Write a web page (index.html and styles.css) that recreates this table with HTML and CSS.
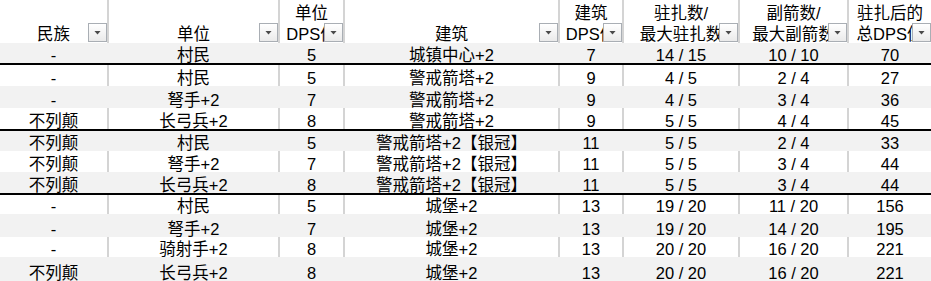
FILE: index.html
```html
<!DOCTYPE html>
<html lang="zh">
<head>
<meta charset="utf-8">
<link rel="stylesheet" href="styles.css">
</head>
<body>
<div class="sheet">
  <div class="row head">
    <div class="cell"><span class="txt">民族</span><span class="fbtn"></span></div>
    <div class="cell"><span class="txt">单位</span><span class="fbtn"></span></div>
    <div class="cell"><span class="txt">单位<br>DPS值</span><span class="fbtn"></span></div>
    <div class="cell"><span class="txt">建筑</span><span class="fbtn"></span></div>
    <div class="cell"><span class="txt">建筑<br>DPS值</span><span class="fbtn"></span></div>
    <div class="cell"><span class="txt">驻扎数/<br>最大驻扎数</span><span class="fbtn"></span></div>
    <div class="cell"><span class="txt">副箭数/<br>最大副箭数</span><span class="fbtn"></span></div>
    <div class="cell"><span class="txt">驻扎后的<br>总DPS值</span><span class="fbtn"></span></div>
  </div>
  <div class="row alt end"><div class="cell">-</div><div class="cell">村民</div><div class="cell">5</div><div class="cell">城镇中心+2</div><div class="cell">7</div><div class="cell">14 / 15</div><div class="cell">10 / 10</div><div class="cell">70</div></div>
  <div class="row"><div class="cell">-</div><div class="cell">村民</div><div class="cell">5</div><div class="cell">警戒箭塔+2</div><div class="cell">9</div><div class="cell">4 / 5</div><div class="cell">2 / 4</div><div class="cell">27</div></div>
  <div class="row alt"><div class="cell">-</div><div class="cell">弩手+2</div><div class="cell">7</div><div class="cell">警戒箭塔+2</div><div class="cell">9</div><div class="cell">4 / 5</div><div class="cell">3 / 4</div><div class="cell">36</div></div>
  <div class="row end"><div class="cell">不列颠</div><div class="cell">长弓兵+2</div><div class="cell">8</div><div class="cell">警戒箭塔+2</div><div class="cell">9</div><div class="cell">5 / 5</div><div class="cell">4 / 4</div><div class="cell">45</div></div>
  <div class="row alt"><div class="cell">不列颠</div><div class="cell">村民</div><div class="cell">5</div><div class="cell">警戒箭塔+2【银冠】</div><div class="cell">11</div><div class="cell">5 / 5</div><div class="cell">2 / 4</div><div class="cell">33</div></div>
  <div class="row"><div class="cell">不列颠</div><div class="cell">弩手+2</div><div class="cell">7</div><div class="cell">警戒箭塔+2【银冠】</div><div class="cell">11</div><div class="cell">5 / 5</div><div class="cell">3 / 4</div><div class="cell">44</div></div>
  <div class="row alt end"><div class="cell">不列颠</div><div class="cell">长弓兵+2</div><div class="cell">8</div><div class="cell">警戒箭塔+2【银冠】</div><div class="cell">11</div><div class="cell">5 / 5</div><div class="cell">3 / 4</div><div class="cell">44</div></div>
  <div class="row"><div class="cell">-</div><div class="cell">村民</div><div class="cell">5</div><div class="cell">城堡+2</div><div class="cell">13</div><div class="cell">19 / 20</div><div class="cell">11 / 20</div><div class="cell">156</div></div>
  <div class="row alt"><div class="cell">-</div><div class="cell">弩手+2</div><div class="cell">7</div><div class="cell">城堡+2</div><div class="cell">13</div><div class="cell">19 / 20</div><div class="cell">14 / 20</div><div class="cell">195</div></div>
  <div class="row"><div class="cell">-</div><div class="cell">骑射手+2</div><div class="cell">8</div><div class="cell">城堡+2</div><div class="cell">13</div><div class="cell">20 / 20</div><div class="cell">16 / 20</div><div class="cell">221</div></div>
  <div class="row alt"><div class="cell">不列颠</div><div class="cell">长弓兵+2</div><div class="cell">8</div><div class="cell">城堡+2</div><div class="cell">13</div><div class="cell">20 / 20</div><div class="cell">16 / 20</div><div class="cell">221</div></div>
</div>
</body>
</html>
```
FILE: styles.css
```css
html, body {
  margin: 0;
  padding: 0;
  background: #ffffff;
}
body {
  font-family: "Liberation Sans", "Noto Sans CJK SC", sans-serif;
  font-size: 16.5px;
  color: #000;
  overflow: hidden;
}
.sheet {
  display: flex;
  flex-direction: column;
  width: 931px;
}
.row {
  display: grid;
  grid-template-columns: 109px 171px 65px 215px 64px 116px 109px 82px;
  box-sizing: border-box;
  background: #ffffff;
}
.row.alt {
  background: #f2f2f2;
}
.row.end {
  border-bottom: 2px solid #000;
}
.cell {
  box-sizing: border-box;
  border-right: 2px solid #d4d4d4;
  display: flex;
  align-items: flex-end;
  justify-content: center;
  line-height: 16px;
  white-space: nowrap;
  overflow: visible;
  position: relative;
}
.row.alt .cell {
  border-right-color: transparent;
}
.cell:last-child {
  border-right: none;
}
.head {
  height: 43px;
}
.head .cell {
  line-height: 21px;
}
.head .txt {
  text-align: center;
  margin-bottom: -2px;
}
.fbtn {
  position: absolute;
  right: 0;
  bottom: 1px;
  width: 19px;
  height: 19px;
  box-sizing: border-box;
  border: 1px solid #a9aeb4;
  background: linear-gradient(#ffffff, #eaeaea);
  display: flex;
  align-items: center;
  justify-content: center;
}
.fbtn::after {
  content: "";
  width: 7px;
  height: 4px;
  background: #4a4a4a;
  clip-path: polygon(0 0, 100% 0, 50% 100%);
}
.sheet > .row:nth-child(2) { height: 22px; }
.sheet > .row:nth-child(3) { height: 21px; }
.sheet > .row:nth-child(4) { height: 22px; }
.sheet > .row:nth-child(5) { height: 23px; }
.sheet > .row:nth-child(6) { height: 20px; }
.sheet > .row:nth-child(7) { height: 21px; }
.sheet > .row:nth-child(8) { height: 23px; }
.sheet > .row:nth-child(9) { height: 19px; }
.sheet > .row:nth-child(10) { height: 23px; }
.sheet > .row:nth-child(11) { height: 20px; }
.sheet > .row:nth-child(12) { height: 24px; }
```
